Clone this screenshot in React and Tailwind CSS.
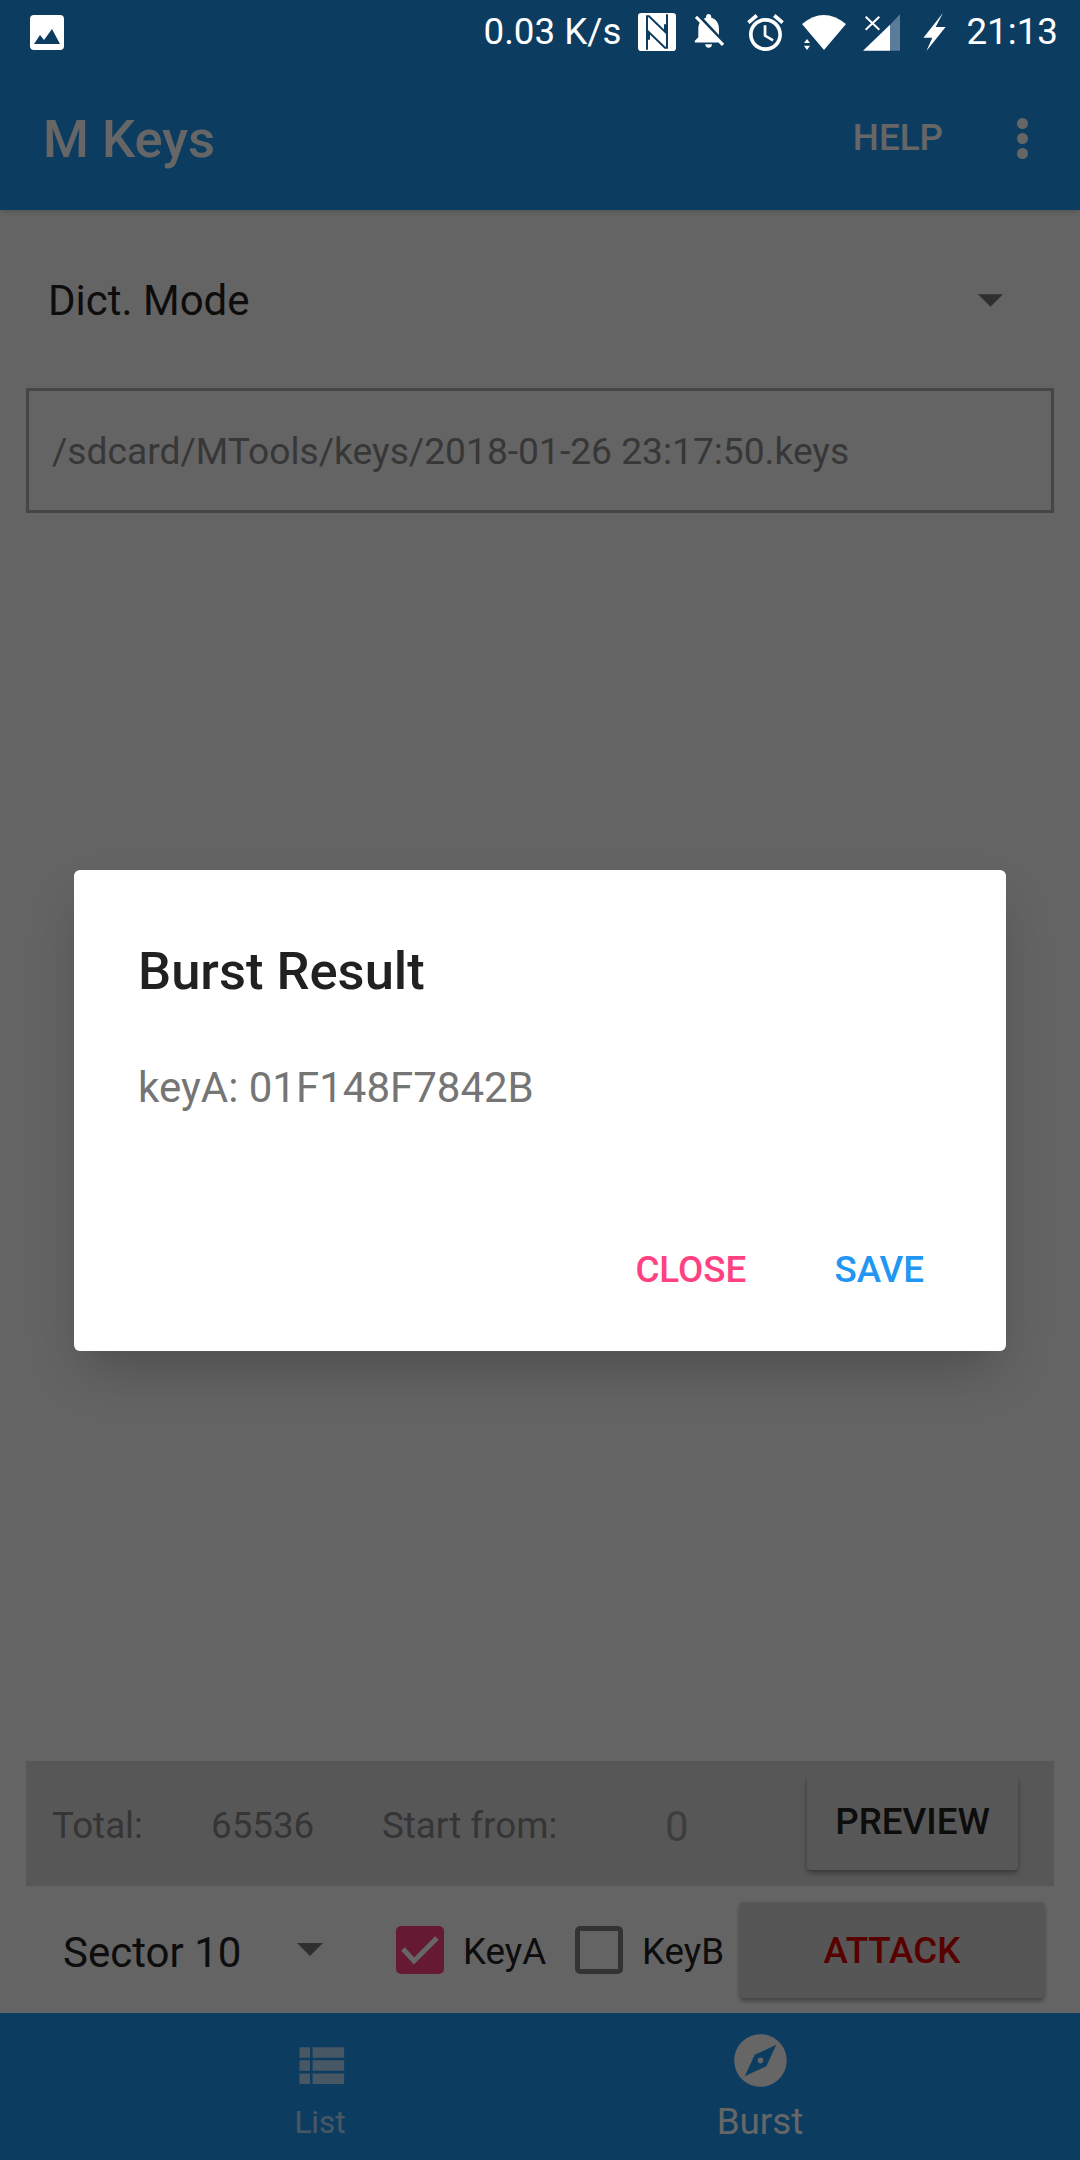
import React from "react";

const roboto = { fontFamily: "Roboto, sans-serif" };

// Material icon paths
const ICON_BELL_OFF = "M20 18.69L7.84 6.14 5.27 3.49 4 4.76l2.8 2.8v.01c-.52.99-.8 2.16-.8 3.42v5l-2 2v1h13.73l2 2L21 19.72l-1-1.03zM12 22c1.11 0 2-.89 2-2h-4c0 1.11.89 2 2 2zm6-7.32V11c0-3.08-1.64-5.64-4.5-6.32V4c0-.83-.67-1.5-1.5-1.5s-1.5.67-1.5 1.5v.68c-.15.03-.29.08-.42.12-.1.03-.2.07-.3.11h-.01c-.2.08-.4.17-.59.27-.01 0-.01 0-.02.01L18 14.68z";
const ICON_ALARM = "M22 5.72l-4.6-3.86-1.29 1.53 4.6 3.86L22 5.72zM7.88 3.39L6.6 1.86 2 5.71l1.29 1.53 4.59-3.85zM12.5 8H11v6l4.75 2.85.75-1.23-4-2.37V8zM12 4c-4.97 0-9 4.03-9 9s4.02 9 9 9c4.97 0 9-4.03 9-9s-4.03-9-9-9zm0 16c-3.87 0-7-3.13-7-7s3.13-7 7-7 7 3.13 7 7-3.13 7-7 7z";
const ICON_EXPLORE = "M12 10.9c-.61 0-1.1.49-1.1 1.1s.49 1.1 1.1 1.1c.61 0 1.1-.49 1.1-1.1s-.49-1.1-1.1-1.1zM12 2C6.48 2 2 6.48 2 12s4.48 10 10 10 10-4.48 10-10S17.52 2 12 2zm2.19 12.19L6 18l3.81-8.19L18 6l-3.78 8.19z";
const ICON_LIST = "M4 14h4v-4H4v4zm0 5h4v-4H4v4zM4 9h4V5H4v4zm5 5h12v-4H9v4zm0 5h12v-4H9v4zM9 5v4h12V5H9z";

function Arrow({ className }) {
  return (
    <svg viewBox="0 0 26 13" className={className}>
      <path d="M0 0h26L13 13z" fill="#757575" />
    </svg>
  );
}

function StatusBar() {
  return (
    <div className="relative z-20 flex h-[72px] shrink-0 items-center bg-[#0d3c61] pr-[22px] pb-[8px] pl-[30px] text-[36.75px] text-white">
      <svg viewBox="0 0 34 35" className="h-[35px] w-[34px]">
        <rect width="34" height="35" rx="4" fill="white" />
        <path d="M4 29l6-9 4 5 8-11 8 15z" fill="#0d3c61" />
      </svg>
      <span className="ml-auto leading-none">0.03 K/s</span>
      {/* NFC */}
      <svg viewBox="0 0 114 114" className="ml-[17px] h-[38px] w-[38px]">
        <rect width="114" height="114" rx="10" fill="white" />
        <path d="M27 110V10h6l48 46V34" stroke="#0d3c61" strokeWidth="6" fill="none" />
        <path d="M87 4v100h-6L33 58v22" stroke="#0d3c61" strokeWidth="6" fill="none" />
      </svg>
      <svg viewBox="3.5 2.5 18 20.8" className="ml-[18px] h-[36px] w-[31px]" fill="white">
        <path d={ICON_BELL_OFF} />
      </svg>
      <svg viewBox="2 1.8 20 20.2" className="ml-[22px] h-[37px] w-[37px]" fill="white">
        <path d={ICON_ALARM} />
      </svg>
      {/* Wifi + activity arrows */}
      <svg viewBox="40 28 132 105" className="ml-[18px] h-[35px] w-[44px]" fill="white">
        <path d="M40 55Q105 1 172 55L106 133z" />
        <path d="M55 100l9 12H46zM46 120h18l-9 13z" />
      </svg>
      {/* Signal with no-data cross */}
      <svg viewBox="222 25 111 110" className="ml-[17px] h-[37px] w-[37px]">
        <path d="M333 25v110h-30V57z" fill="#5b7c99" />
        <path d="M303 57v78h-81z" fill="white" />
        <path d="M230 33l41 39M271 33l-41 39" stroke="white" strokeWidth="6" fill="none" />
      </svg>
      <svg viewBox="403 20 67 115" className="ml-[23px] h-[38px] w-[23px]" fill="white">
        <path d="M462 20L403 95h27l-18 40 58-73h-30z" />
      </svg>
      <span className="ml-[20px] leading-none">21:13</span>
    </div>
  );
}

function AppBar() {
  return (
    <div className="z-10 flex h-[138px] shrink-0 items-center bg-[#2196f3] pr-[52px] pb-[6px] pl-[43px] text-white shadow-md">
      <span className="pt-[2px] text-[52.5px] leading-none font-medium">M Keys</span>
      <span className="ml-auto text-[36.75px] leading-none font-medium">HELP</span>
      <svg viewBox="0 0 11 41" className="ml-[74px] h-[41px] w-[11px]" fill="white">
        <circle cx="5.5" cy="5.5" r="5.5" />
        <circle cx="5.5" cy="20.5" r="5.5" />
        <circle cx="5.5" cy="35.5" r="5.5" />
      </svg>
    </div>
  );
}

function DictForm() {
  return (
    <div className="flex-1 px-[26px]">
      <div className="flex h-[178px] items-center pt-[3px] pr-[51px] pl-[22px]">
        <span className="text-[42px] text-[#212121]">Dict. Mode</span>
        <Arrow className="ml-auto h-[13px] w-[25px]" />
      </div>
      <div className="flex h-[125px] items-center border-[3px] border-[#b0b0b0] pt-[3px] pl-[23px]">
        <span className="text-[37.2px] text-[#8a8a8a]">/sdcard/MTools/keys/2018-01-26 23:17:50.keys</span>
      </div>
    </div>
  );
}

function Controls() {
  return (
    <div className="px-[26px]">
      <div className="flex h-[125px] items-center bg-[#dadada] pr-[36px] pl-[26px] text-[36.75px] text-[#858585]">
        <span className="w-[159px] pt-[5px]">Total:</span>
        <span className="w-[171px] pt-[5px]">65536</span>
        <span className="w-[281px] pt-[5px]">Start from:</span>
        <span className="ml-[2px] pt-[5px] text-[42px] text-[#999999]">0</span>
        <button className="mb-[3px] ml-auto h-[95px] w-[211px] rounded-[4px] bg-[#dadada] text-[36.75px] font-medium text-[#212121] shadow-[0_3px_5px_rgba(0,0,0,0.35)]">
          PREVIEW
        </button>
      </div>
      <div className="flex h-[127px] items-center pr-[10px] text-[#212121]">
        <span className="ml-[37px] w-[234px] pt-[5px] text-[42px]">Sector 10</span>
        <Arrow className="h-[13px] w-[26px]" />
        <span className="ml-[73px] flex h-[48px] w-[48px] items-center justify-center rounded-[5px] bg-[#ff4081]">
          <svg viewBox="0 0 48 48" className="h-[48px] w-[48px]" fill="none">
            <path d="M7 23l11 12L41 12" stroke="white" strokeWidth="5" />
          </svg>
        </span>
        <span className="ml-[19px] w-[112px] pt-[5px] text-[36.75px]">KeyA</span>
        <span className="h-[48px] w-[48px] rounded-[5px] border-[5px] border-[#808080]"></span>
        <span className="ml-[19px] pt-[5px] text-[36.75px]">KeyB</span>
        <button className="ml-auto h-[96px] w-[304px] rounded-[4px] bg-[#d6d6d6] pt-[2px] text-[36.75px] font-medium text-[#dd0000] shadow-[0_3px_5px_rgba(0,0,0,0.35)]">
          ATTACK
        </button>
      </div>
    </div>
  );
}

function BottomNav() {
  return (
    <div className="grid h-[147px] shrink-0 grid-cols-2 bg-[#2196f3] px-[100px] text-white">
      <div className="flex flex-col items-center pt-[21px] text-white/65">
        <svg viewBox="0 0 24 24" className="h-[63px] w-[63px]" fill="currentColor">
          <path d={ICON_LIST} />
        </svg>
        <span className="mt-[6px] text-[31.5px] leading-[40px]">List</span>
      </div>
      <div className="flex flex-col items-center pt-[16px]">
        <svg viewBox="0 0 24 24" className="h-[63px] w-[63px]" fill="currentColor">
          <path d={ICON_EXPLORE} />
        </svg>
        <span className="mt-[8px] text-[36.75px] leading-[44px]">Burst</span>
      </div>
    </div>
  );
}

function ResultDialog() {
  return (
    <div className="absolute inset-0 z-10 flex items-center justify-center bg-black/60 pt-[61px]">
      <div className="h-[481px] w-[932px] rounded-[6px] bg-white px-[64px] pt-[72px] shadow-2xl">
        <h2 className="text-[52.5px] leading-[58px] font-medium text-[#212121]">Burst Result</h2>
        <p className="mt-[65px] text-[42px] leading-[46px] text-[#757575]">keyA: 01F148F7842B</p>
        <div className="mt-[131px] flex justify-end gap-[88px] pr-[18px] text-[36.75px] font-medium">
          <span className="text-[#ff4081]">CLOSE</span>
          <span className="text-[#2196f3]">SAVE</span>
        </div>
      </div>
    </div>
  );
}

export default function App() {
  return (
    <div className="relative flex h-[2160px] w-[1080px] flex-col overflow-hidden bg-[#fafafa]" style={roboto}>
      <StatusBar />
      <AppBar />
      <DictForm />
      <Controls />
      <BottomNav />
      <ResultDialog />
    </div>
  );
}
